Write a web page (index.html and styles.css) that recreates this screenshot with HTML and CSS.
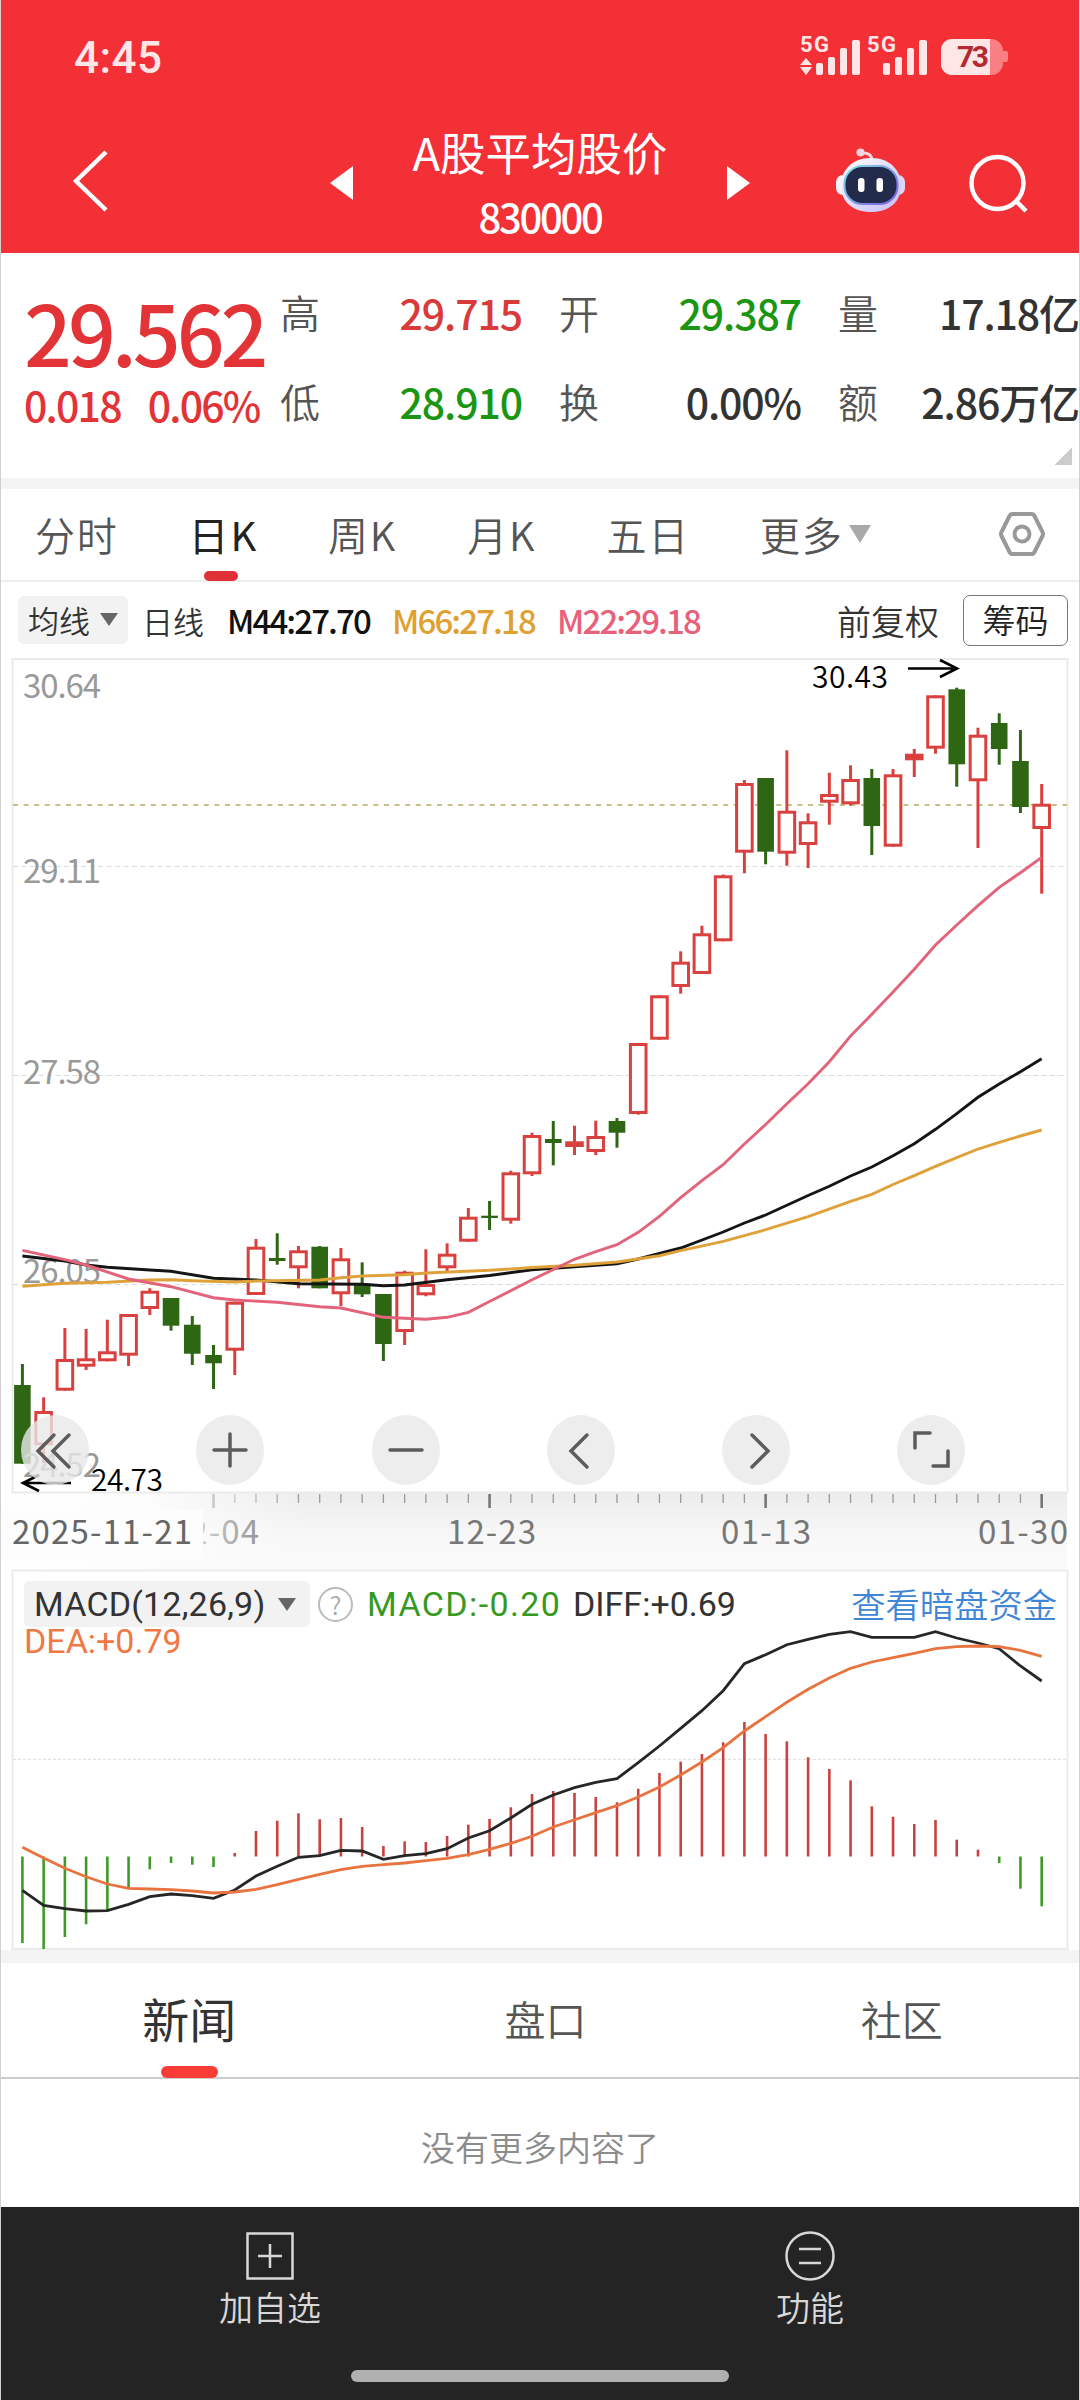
FILE: index.html
```html
<!DOCTYPE html>
<html lang="zh-CN">
<head>
    <meta charset="UTF-8">
    <meta name="viewport" content="width=device-width, initial-scale=1.0">
    <title>A股平均股价 830000</title>
    <link rel="stylesheet" href="styles.css">
</head>
<body>
    <div class="screen">
        <header class="top">
            <div class="status">
                <span class="time">4:45</span>
                <svg class="status-icons" width="210" height="44" viewBox="0 0 210 44">
                    <g class="light">
                        <text class="net" x="0" y="18" textLength="29">5G</text>
                        <path d="M6 24l6 7H0zM6 41l6-8H0z"/>
                        <rect x="16" y="29" width="7" height="12" rx="2"/>
                        <rect x="28" y="23" width="7" height="18" rx="2"/>
                        <rect x="40" y="14" width="7" height="27" rx="2"/>
                        <rect x="52" y="6" width="8" height="35" rx="2"/>
                        <text class="net" x="67" y="18" textLength="29">5G</text>
                        <rect x="83" y="29" width="7" height="12" rx="2"/>
                        <rect x="95" y="23" width="7" height="18" rx="2"/>
                        <rect x="107" y="14" width="7" height="27" rx="2"/>
                        <rect x="119" y="6" width="8" height="35" rx="2"/>
                    </g>
                    <path class="battery-rest" d="M189 5h2a12 12 0 0 1 12 12h3q2 0 2 3v5q0 3-2 3h-3a12 12 0 0 1-12 13h-2z"/>
                    <path class="light" d="M152 5h38v36h-38a11 11 0 0 1-11-11V16a11 11 0 0 1 11-11z"/>
                    <text class="battery-text" x="157" y="33" textLength="32">73</text>
                </svg>
            </div>
            <div class="nav">
                <svg class="back" width="38" height="64" viewBox="0 0 38 64"><path d="M34 3L4 32l30 29"/></svg>
                <div class="stock">
                    <svg width="23" height="34" viewBox="0 0 23 34"><path d="M23 0v34L0 17z"/></svg>
                    <div class="stock-name">
                        <div class="name">A股平均股价</div>
                        <div class="code num">830000</div>
                    </div>
                    <svg width="23" height="34" viewBox="0 0 23 34"><path d="M0 0v34l23-17z"/></svg>
                </div>
                <svg class="robot" width="72" height="66" viewBox="0 0 72 66">
                    <defs>
                        <linearGradient id="shell" x1="0" y1="0" x2="1" y2="1">
                            <stop offset="0" stop-color="#ffffff"/>
                            <stop offset="1" stop-color="#c4bcf6"/>
                        </linearGradient>
                        <linearGradient id="rim" x1="0" y1="0" x2="1" y2="1">
                            <stop offset="0" stop-color="#7fe0e6"/>
                            <stop offset="1" stop-color="#7a5be0"/>
                        </linearGradient>
                    </defs>
                    <path d="M26 5q11-1 11 8" fill="none" stroke="#fbd5dc" stroke-width="3"/>
                    <circle cx="25.500" cy="4.500" r="4" fill="#fbd5dc"/>
                    <rect x="1" y="27" width="14" height="20" rx="7" fill="#f6f2fd"/>
                    <rect x="56" y="27" width="14" height="20" rx="7" fill="#dcd8f8"/>
                    <path d="M36 10c20 0 30 13 30 28 0 16-12 26-30 26S6 54 6 38c0-15 10-28 30-28z" fill="url(#shell)"/>
                    <rect x="9.500" y="18" width="53" height="38" rx="18" fill="#232b4d" stroke="url(#rim)" stroke-width="2"/>
                    <rect x="23" y="30" width="6.500" height="14" rx="3" fill="#fff"/>
                    <rect x="41.500" y="30" width="6.500" height="14" rx="3" fill="#fff"/>
                </svg>
                <svg class="search" width="60" height="60" viewBox="0 0 60 60"><circle cx="29.500" cy="30" r="26"/><path d="M47 47l11 11"/></svg>
            </div>
        </header>

        <section class="quote">
            <div class="price">
                <div class="last num">29.562</div>
                <div class="change num"><span>0.018</span><span>0.06%</span></div>
            </div>
            <dl class="stats">
                <div><dt>高</dt><dd class="num up">29.715</dd></div>
                <div><dt>开</dt><dd class="num down">29.387</dd></div>
                <div><dt>量</dt><dd class="num">17.18亿</dd></div>
                <div><dt>低</dt><dd class="num down">28.910</dd></div>
                <div><dt>换</dt><dd class="num">0.00%</dd></div>
                <div><dt>额</dt><dd class="num">2.86万亿</dd></div>
            </dl>
            <span class="corner"></span>
        </section>

        <nav class="period">
            <span>分时</span>
            <span class="active">日K</span>
            <span>周K</span>
            <span>月K</span>
            <span>五日</span>
            <span class="more">更多<i class="caret"></i></span>
            <svg width="46" height="46" viewBox="0 0 46 46"><path d="M13.500 3h19q2 0 3 2l8 16q1 2 0 4l-8 16q-1 2-3 2h-19q-2 0-3-2l-8-16q-1-2 0-4l8-16q1-2 3-2z"/><circle cx="23" cy="23" r="7.500"/></svg>
        </nav>

        <div class="indicators">
            <span class="picker">均线<i class="caret"></i></span>
            <span class="line-name">日线</span>
            <span class="ma num m44">M44:27.70</span>
            <span class="ma num m66">M66:27.18</span>
            <span class="ma num m22">M22:29.18</span>
            <span class="adjust">前复权</span>
            <span class="chips">筹码</span>
        </div>

        <div class="kline">
            <svg id="kline" width="1080" height="835" viewBox="0 658 1080 835"></svg>
            <div class="tools">
                <button><svg viewBox="0 0 68 70"><path d="M33 20L17 36l16 16M48 20L32 36l16 16"/></svg></button>
                <button><svg viewBox="0 0 68 70"><path d="M18 35h32M34 19v32"/></svg></button>
                <button><svg viewBox="0 0 68 70"><path d="M18 35h32"/></svg></button>
                <button><svg viewBox="0 0 68 70"><path d="M40 20L24 36l16 16"/></svg></button>
                <button><svg viewBox="0 0 68 70"><path d="M30 20l16 16-16 16"/></svg></button>
                <button><svg viewBox="0 0 68 70"><path d="M18 33V18h15M36 51h15V36"/></svg></button>
            </div>
        </div>
        <svg id="axis" class="axis" width="1080" height="77" viewBox="0 1493 1080 77"></svg>

        <div class="macd">
            <svg id="macd" width="1080" height="380" viewBox="0 1570 1080 380"></svg>
            <div class="macd-head">
                <div class="macd-row">
                    <span class="picker">MACD(12,26,9)<i class="caret"></i></span>
                    <span class="help">?</span>
                    <span class="macd-val">MACD:-0.20</span>
                    <span class="diff-val">DIFF:+0.69</span>
                    <a class="link">查看暗盘资金</a>
                </div>
                <span class="dea-val">DEA:+0.79</span>
            </div>
        </div>

        <nav class="news-tabs">
            <span class="active">新闻</span>
            <span>盘口</span>
            <span>社区</span>
        </nav>
        <div class="empty">没有更多内容了</div>

        <footer class="bottom">
            <div class="actions">
                <div class="action">
                    <svg width="50" height="50" viewBox="0 0 50 50"><path d="M2.500 2.500h45v45h-45zM25 13v24M13 25h24"/></svg>
                    <span>加自选</span>
                </div>
                <div class="action">
                    <svg width="50" height="50" viewBox="0 0 50 50"><circle cx="25" cy="25" r="23.500"/><path d="M14 18h22M14 32h22"/></svg>
                    <span>功能</span>
                </div>
            </div>
            <div class="home-bar"></div>
        </footer>
    </div>
    <script src="script.js"></script>
</body>
</html>
```
FILE: styles.css
```css
* {
    box-sizing: border-box;
}

body {
    margin: 0;
    background-color: #fff;
    font-family: "Noto Sans CJK SC", sans-serif;
    font-weight: 350;
    color: #333;
}

.screen {
    width: 1080px;
    height: 2400px;
    display: flex;
    flex-direction: column;
    overflow: hidden;
    white-space: nowrap;
    border: solid #d0d0d0;
    border-width: 0 1px;
}

.screen > * {
    margin-left: -1px;
    margin-right: -1px;
    flex-shrink: 0;
}

svg {
    display: block;
    overflow: visible;
}

.num {
    font-weight: 500;
}

.up {
    color: #d93a3a;
}

.down {
    color: #1a9612;
}

.caret {
    border: solid transparent;
    border-width: 13px 9px 0;
    border-top-color: #666;
}

/* header */
.top {
    height: 253px;
    background-color: #f23036;
    color: #fff;
}

.status {
    height: 112px;
    padding: 0 70px 0 74px;
    display: flex;
    justify-content: space-between;
    align-items: center;
}

.time {
    font: 500 44px/1 Roboto, sans-serif;
    letter-spacing: 0.5px;
    padding-top: 3px;
    color: #ffe6e6;
}

.light {
    fill: #ffe6e6;
}

.battery-rest {
    fill: #fa7f82;
}

.net {
    font: 700 22px Roboto, sans-serif;
}

.battery-text {
    font: 700 30px Roboto, sans-serif;
    fill: #b52a30;
}

.nav {
    height: 141px;
    display: flex;
    align-items: center;
    padding: 0 50px 3px 72px;
}

.back,
.search {
    fill: none;
    stroke: #fff;
    stroke-width: 4.5;
}

.stock {
    margin-left: 220px;
    width: 420px;
    display: flex;
    justify-content: space-between;
    align-items: center;
    fill: #fff;
    padding-top: 3px;
}

.stock-name {
    text-align: center;
}

.name {
    font-size: 45.500px;
    font-weight: 400;
    line-height: 60px;
}

.code {
    font-size: 40px;
    letter-spacing: -2.300px;
    line-height: 56px;
    margin-top: 7px;
}

.robot {
    margin-left: 85px;
}

.search {
    margin-left: 61px;
    margin-top: 4px;
}

/* quote */
.quote {
    position: relative;
    height: 236px;
    border-bottom: 11px solid #f4f4f4;
    display: flex;
}

.price {
    width: 280px;
    padding: 31px 0 0 24px;
    color: #e23337;
}

.last {
    font-size: 84px;
    letter-spacing: -4px;
    line-height: 93px;
}

.change {
    display: flex;
    gap: 27px;
    font-size: 41px;
    letter-spacing: -1.800px;
    line-height: 50px;
    margin-top: 2px;
}

.stats {
    margin: 0;
    flex: 1;
    display: grid;
    grid-template-columns: 243px 243px 242px;
    grid-auto-rows: 89px;
    column-gap: 36px;
    padding-top: 14px;
}

.stats div {
    display: flex;
    justify-content: space-between;
    align-items: center;
}

.stats dt {
    font-size: 40px;
    color: #555;
}

.stats dd {
    margin: 0 1px 0 0;
    font-size: 41px;
    letter-spacing: -1.100px;
}

.corner {
    position: absolute;
    right: 8px;
    bottom: 13px;
    width: 17px;
    height: 17px;
    background: linear-gradient(135deg, transparent 50%, #ccc 50%);
}

/* period tabs */
.period {
    height: 93px;
    border-bottom: 2px solid #ededed;
    display: flex;
    align-items: center;
    padding: 0 35px 2px 35px;
    font-size: 40px;
    letter-spacing: 1.800px;
    color: #555;
}

.period span {
    position: relative;
    margin-right: 70px;
}

.period .active {
    color: #222;
    font-weight: 400;
}

.period .active::after {
    content: "";
    position: absolute;
    left: 50%;
    bottom: -18px;
    width: 34px;
    height: 10px;
    margin-left: -19px;
    border-radius: 5px;
    background-color: #e03236;
}

.period .more {
    display: flex;
    align-items: center;
    gap: 5px;
    margin-right: auto;
}

.more .caret {
    border-width: 18px 11px 0;
    border-top-color: #aaa;
}

.period svg {
    fill: none;
    stroke: #999;
    stroke-width: 4;
}

/* moving averages */
.indicators {
    height: 76px;
    display: flex;
    align-items: center;
    padding: 0 12px 0 18px;
    font-size: 32px;
}

.picker {
    height: 48px;
    display: flex;
    align-items: center;
    gap: 10px;
    padding: 0 10px 2px;
    background-color: #f2f2f2;
    border-radius: 6px;
}

.indicators .picker {
    width: 110px;
    font-size: 31px;
}

.line-name {
    margin: 0 23px 0 14px;
    font-size: 31px;
}

.ma {
    width: 142px;
    margin-right: 23px;
    font-size: 33px;
    letter-spacing: -1.900px;
}

.m44 {
    color: #111;
}

.m66 {
    color: #e0a030;
}

.m22 {
    color: #e8607a;
}

.adjust {
    margin-left: auto;
    font-size: 34px;
}

.chips {
    width: 105px;
    height: 51px;
    margin-left: 24px;
    border: 1.5px solid #777;
    border-radius: 7px;
    font-size: 33px;
    line-height: 46px;
    text-align: center;
    color: #222;
}

/* candles */
.kline {
    position: relative;
}

.tools {
    position: absolute;
    left: 21px;
    top: 757px;
    display: flex;
    gap: 107.300px;
}

.tools button {
    width: 68px;
    height: 70px;
    padding: 0;
    border: none;
    border-radius: 50%;
    background-color: rgba(232, 232, 232, 0.8);
}

.tools path {
    fill: none;
    stroke: #5c5c5c;
    stroke-width: 3.5;
    stroke-linecap: round;
}

.axis text,
.kline text {
    font-size: 33px;
    font-weight: 400;
}

.kline .tag {
    font-size: 30px;
    font-weight: 350;
}

/* macd */
.macd {
    position: relative;
    height: 393px;
    border-bottom: 13px solid #f4f4f4;
}

.macd-head {
    position: absolute;
    top: 11px;
    left: 24px;
    right: 23px;
}

.macd-row {
    display: flex;
    align-items: center;
    height: 46px;
    font-size: 34px;
}

.macd-row .picker,
.macd-val,
.diff-val,
.dea-val {
    font-family: Roboto, sans-serif;
    font-weight: 400;
    font-size: 34px;
}

.macd-row .picker {
    width: 286px;
    height: 46px;
    justify-content: space-between;
    padding: 0 14px 0 10px;
    letter-spacing: 0.200px;
}

.help {
    width: 35px;
    height: 35px;
    margin: 0 14px 0 8px;
    border: 2px solid #bbb;
    border-radius: 50%;
    font-size: 25px;
    line-height: 30px;
    text-align: center;
    color: #aaa;
}

.macd-val {
    width: 206px;
    letter-spacing: 1.400px;
    color: #369a22;
}

.link {
    margin-left: auto;
    padding-bottom: 3px;
    font-size: 34.300px;
    color: #3f87d6;
}

.dea-val {
    display: block;
    line-height: 28px;
    color: #f07845;
}

/* news */
.news-tabs {
    height: 116px;
    border-bottom: 2px solid #ccc;
    padding: 0 0 5px 11px;
    display: flex;
    align-items: center;
    font-size: 41px;
    color: #555;
}

.news-tabs span {
    position: relative;
    flex: 1;
    text-align: center;
}

.news-tabs .active {
    font-size: 47px;
    font-weight: 400;
    color: #333;
}

.news-tabs .active::after {
    content: "";
    position: absolute;
    left: 50%;
    bottom: -26px;
    width: 57px;
    height: 12px;
    margin-left: -28px;
    border-radius: 6px;
    background-color: #fa3c36;
}

.empty {
    height: 128px;
    padding-top: 9px;
    line-height: 118px;
    text-align: center;
    font-size: 34px;
    color: #8c8c8c;
}

/* bottom bar */
.bottom {
    flex: 1;
    background-color: #242424;
    color: #d8d8d8;
}

.actions {
    display: flex;
    height: 163px;
    padding-top: 24px;
}

.action {
    flex: 1;
    display: flex;
    flex-direction: column;
    align-items: center;
    font-size: 34px;
    line-height: 50px;
    gap: 1px;
}

.action svg {
    fill: none;
    stroke: #d8d8d8;
    stroke-width: 2.5;
}

.home-bar {
    width: 378px;
    height: 12px;
    margin: 0 auto;
    border-radius: 6px;
    background-color: #b0b0b0;
}
```
FILE: script.js
```js
const START = 22.4;
const STEP = 21.235;
const x = i => START + STEP * i;

// type, high, body top, body bottom, low
const candles = [
    ['g', 1364, 1385, 1463.7, 1463.7], ['r', 1397.3, 1411, 1445.3, 1463], ['r', 1328, 1359, 1390.7, 1390.7],
    ['r', 1329, 1358.3, 1366.7, 1370], ['r', 1319.7, 1351.3, 1361.3, 1361.3], ['r', 1314, 1314, 1355.7, 1366],
    ['r', 1288.3, 1290.7, 1309, 1315], ['g', 1298, 1298, 1325.7, 1330.7], ['g', 1316, 1324.7, 1353.7, 1365],
    ['g', 1345, 1355, 1363.3, 1389], ['r', 1301.7, 1301.7, 1350.7, 1375], ['r', 1239, 1246.7, 1295, 1295],
    ['g', 1233.3, 1258, 1261, 1264.7], ['r', 1246, 1250.3, 1268.3, 1288.3], ['g', 1246, 1246.7, 1288.3, 1288.3],
    ['r', 1248, 1258.3, 1294.3, 1306], ['g', 1262.3, 1283.7, 1294.3, 1297], ['g', 1294, 1294, 1344, 1361],
    ['r', 1270.7, 1271.7, 1332, 1345], ['r', 1249.3, 1284, 1295.3, 1296.3], ['r', 1243.3, 1253.7, 1268.3, 1271],
    ['r', 1208, 1216.7, 1241.7, 1241.7], ['g', 1201, 1215.7, 1218, 1230], ['r', 1170.7, 1172.3, 1220.7, 1223.7],
    ['r', 1132.7, 1135, 1174.3, 1176], ['g', 1121, 1139, 1143, 1165.3], ['r', 1125.7, 1141.3, 1147, 1155],
    ['r', 1120.7, 1136, 1152, 1155], ['g', 1118, 1121, 1132.7, 1147.7], ['r', 1043, 1043, 1114, 1114.7],
    ['r', 995.3, 995.3, 1039.7, 1039.7], ['r', 951.3, 961.7, 987, 993.7], ['r', 925.7, 933.3, 974, 974],
    ['r', 874.5, 875.3, 941.3, 941.3], ['r', 780, 783, 852.7, 873.3], ['g', 778, 778, 851.7, 864.3],
    ['r', 750.3, 810.7, 853.7, 865.7], ['r', 813.3, 821.3, 845, 868], ['r', 772.7, 794, 802.7, 824.7],
    ['r', 765.3, 779, 804.3, 805.7], ['g', 769, 778, 826, 855], ['r', 769, 774.3, 846.7, 846.7],
    ['r', 749, 753.7, 760.3, 777], ['r', 695.3, 695.3, 748.7, 753.7], ['g', 687.7, 689.3, 764.3, 786.7],
    ['r', 727.7, 734.7, 781.3, 848], ['g', 713.3, 723, 749, 764.7], ['g', 730, 761, 807, 813],
    ['r', 784, 803.7, 829, 893.7]
];

// [index, y] points
const ma44 = [[0, 1256], [2, 1261], [3, 1265], [4, 1267.3], [6, 1270], [7, 1271.3], [9, 1278.3], [11, 1280], [13, 1283.7], [16, 1284.3], [17, 1285.7], [18, 1285], [20, 1279.7], [22, 1275.5], [24, 1269.7], [28, 1263.7], [29, 1259], [31, 1248], [33, 1232], [34, 1223], [35, 1215], [37, 1195.5], [38, 1186.3], [39, 1176], [40, 1167], [41, 1155.7], [42, 1143.7], [43, 1129.3], [44, 1113.7], [45, 1097.3], [46, 1084], [47, 1071.7], [48, 1058.7]];
const ma66 = [[0, 1286.3], [2, 1283.3], [4, 1282.3], [6, 1280], [7, 1279.7], [8, 1280.7], [10, 1282], [11, 1281], [14, 1280], [15, 1277.7], [16, 1276], [18, 1274.7], [19, 1273], [22, 1270.3], [24, 1267.5], [26, 1265.3], [28, 1262], [30, 1255.7], [31, 1250.7], [33, 1241.3], [35, 1229.7], [37, 1216.7], [39, 1201.3], [40, 1194.3], [41, 1184.5], [42, 1175.7], [43, 1166.3], [44, 1157.7], [45, 1149], [46, 1142.3], [47, 1136], [48, 1130]];
const ma22 = [[0, 1250.3], [2, 1259.7], [3, 1265], [5, 1279], [7, 1286.7], [9, 1297.7], [10, 1300], [12, 1302.3], [14, 1306.7], [15, 1308], [17, 1317.3], [19, 1319.3], [20, 1317.3], [21, 1312.3], [22, 1301.5], [24, 1279.8], [26, 1259.3], [27, 1251.7], [28, 1244.7], [29, 1232.3], [30, 1216.3], [31, 1197.7], [32, 1180.7], [33, 1164.7], [34, 1144], [35, 1124.5], [36, 1103.8], [37, 1083.7], [38, 1061.7], [39, 1036], [40, 1014.3], [41, 992], [42, 969.3], [43, 945], [44, 925], [45, 905.7], [46, 887.3], [47, 872.7], [48, 857.3]];

const ZERO = 1856.5;
const hist = [1943, 1949, 1937, 1924.3, 1910, 1888, 1869.3, 1863, 1864.7, 1867, 1853, 1831, 1820.7, 1813.3, 1819.3, 1818, 1827, 1846, 1841.3, 1842, 1836, 1824.7, 1819, 1807.3, 1794, 1791, 1793, 1797, 1802.3, 1788.7, 1773, 1761.7, 1754, 1742.3, 1722, 1734, 1741.3, 1757.3, 1769, 1780.3, 1806.3, 1816.7, 1824, 1820, 1839.7, 1849.7, 1863, 1888.7, 1906.3];
const diff = [1890.3, 1905.3, 1908.7, 1911, 1910.7, 1904.3, 1896.7, 1894, 1895.7, 1898.3, 1890, 1876, 1866.3, 1857.3, 1855.7, 1850.3, 1851, 1859.3, 1855.7, 1853.7, 1848.7, 1838, 1830.7, 1818, 1804.3, 1795, 1787.7, 1782.3, 1778.7, 1762.7, 1746, 1728.3, 1710.7, 1690.7, 1663.7, 1654.7, 1644.7, 1639.3, 1634.3, 1631.7, 1637.3, 1637.3, 1637.3, 1631.7, 1638, 1643, 1648.7, 1666, 1681];
const dea = [1847.3, 1858, 1868.3, 1876.7, 1884, 1888.3, 1889, 1889.7, 1891, 1893, 1892, 1889.3, 1884.7, 1879.3, 1874.3, 1869.7, 1866.3, 1864.7, 1863, 1860.7, 1858.3, 1854.7, 1849.3, 1843.3, 1836.3, 1827, 1819.7, 1812.7, 1805.7, 1797, 1787, 1775, 1762, 1747.7, 1731, 1716.7, 1702.3, 1689.3, 1678, 1668.3, 1662, 1657.7, 1653.3, 1648.7, 1646.7, 1646, 1646.7, 1650.3, 1656.3];

const line = (x1, y1, x2, y2, color, width, extra = '') =>
    `<line x1="${x1}" y1="${y1}" x2="${x2}" y2="${y2}" stroke="${color}" stroke-width="${width}" ${extra}/>`;
const curve = (pts, color, width) =>
    `<polyline points="${pts.map(p => x(p[0]) + ',' + p[1]).join(' ')}" fill="none" stroke="${color}" stroke-width="${width}"/>`;
const label = (tx, ty, str, color, len, cls = '') =>
    `<text x="${tx}" y="${ty}" fill="${color}" class="${cls}" textLength="${len}">${str}</text>`;
const frame = (top, height) =>
    `<rect x="12.5" y="${top}" width="1055" height="${height}" fill="none" stroke="#ebebeb" stroke-width="2"/>`;

function drawKline() {
    let out = frame(659, 833.5);
    [866.5, 1075.5, 1284.5].forEach(y => {
        out += line(13, y, 1067, y, '#dcdcdc', 1, 'stroke-dasharray="5 3.5"');
    });
    out += line(13, 805, 1067, 805, '#b9a95c', 1.5, 'stroke-dasharray="5 5.6"');

    candles.forEach(([type, high, top, bottom, low], i) => {
        const cx = x(i);
        if (type === 'g') {
            out += line(cx, high, cx, low, '#2f6614', 3);
            out += `<rect x="${cx - 8.3}" y="${top}" width="16.6" height="${bottom - top}" fill="#2f6614"/>`;
        } else {
            out += line(cx, high, cx, top + 1, '#d9413f', 3);
            out += line(cx, bottom - 1, cx, low, '#d9413f', 3);
            out += `<rect x="${cx - 7.8}" y="${top + 1.5}" width="15.6" height="${Math.max(bottom - top - 3, 2)}" fill="${bottom - top < 7 ? '#e23337' : '#fff'}" stroke="#d9413f" stroke-width="3"/>`;
        }
    });

    [['30.64', 698], ['29.11', 883], ['27.58', 1084], ['26.05', 1283], ['24.52', 1477]].forEach(([str, y]) => {
        out += label(23, y, str, '#999', 78);
    });
    out += curve(ma44, '#151515', 2.9) + curve(ma66, '#dfa23a', 2.9) + curve(ma22, '#e2637a', 2.9);

    out += label(812, 688, '30.43', '#000', 76, 'tag');
    out += '<path d="M908 668.500h48M940 660l17 8.500-17 8.500" fill="none" stroke="#000" stroke-width="2.6"/>';
    out += label(91, 1491, '24.73', '#000', 72, 'tag');
    out += '<path d="M71 1483H23M39 1475l-16 8 16 8" fill="none" stroke="#000" stroke-width="2.6"/>';
    document.getElementById('kline').innerHTML = out;
}

function drawAxis() {
    let out = `<defs>
        <linearGradient id="shade" x1="0" y1="0" x2="0" y2="1"><stop offset="0" stop-color="#ececec"/><stop offset="0.6" stop-color="#f8f8f8"/><stop offset="1" stop-color="#fafafa"/></linearGradient>
        <linearGradient id="fade" x1="0" y1="0" x2="1" y2="0"><stop offset="0" stop-color="#fff"/><stop offset="0.5" stop-color="#fcfcfc"/><stop offset="1" stop-color="#fafafa" stop-opacity="0"/></linearGradient>
    </defs><rect x="0" y="1493" width="1067" height="76" fill="url(#shade)"/>`;
    for (let i = 9; i < 49; i++) {
        const major = [9, 22, 35, 48].includes(i);
        out += line(x(i), 1494, x(i), major ? 1508 : 1503, major ? '#777' : '#999', major ? 2.6 : 1.3);
    }
    out += label(170, 1544, '12-04', '#666', 89);
    out += '<rect x="0" y="1493" width="310" height="76" fill="url(#fade)"/><rect x="0" y="1510" width="203" height="50" fill="#fdfdfd"/>';
    out += label(12, 1544, '2025-11-21', '#666', 180);
    out += label(447, 1544, '12-23', '#777', 89);
    out += label(721, 1544, '01-13', '#777', 90);
    out += label(978, 1544, '01-30', '#777', 90);
    document.getElementById('axis').innerHTML = out;
}

function drawMacd() {
    let out = frame(1570.5, 378.5);
    out += line(13, 1759.3, 1067, 1759.3, '#dcdcdc', 1, 'stroke-dasharray="3 2"');
    hist.forEach((y, i) => {
        out += line(x(i), ZERO, x(i), y, y > ZERO ? '#3f9a28' : '#c8423f', 2.6);
    });
    out += curve(diff.map((y, i) => [i, y]), '#262626', 2.8);
    out += curve(dea.map((y, i) => [i, y]), '#e8733f', 2.8);
    document.getElementById('macd').innerHTML = out;
}

drawKline();
drawAxis();
drawMacd();
```
